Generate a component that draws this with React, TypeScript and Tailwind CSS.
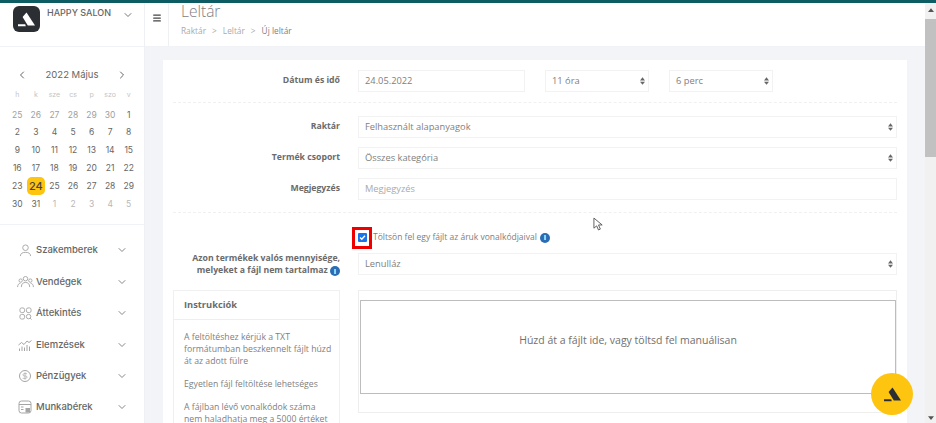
import React from "react";
import { ChevronDown, ChevronLeft, ChevronRight, Menu, DollarSign } from "lucide-react";

const sans = "font-['Inter','Liberation_Sans',sans-serif]";
const form = "font-['Open_Sans','Liberation_Sans',sans-serif]";

const weeks = [
  ["25", "26", "27", "28", "29", "30", "1"],
  ["2", "3", "4", "5", "6", "7", "8"],
  ["9", "10", "11", "12", "13", "14", "15"],
  ["16", "17", "18", "19", "20", "21", "22"],
  ["23", "24", "25", "26", "27", "28", "29"],
  ["30", "31", "1", "2", "3", "4", "5"],
];

const Logo = ({ className }: { className: string }) => (
  <svg viewBox="0 0 24 24" className={className} fill="currentColor">
    <path d="M6.5 8.5 L12 2 L24 20.5 L13.8 20.5 Z" />
    <path d="M0 18.8 H10.2 L11 21.5 H0 Z" />
  </svg>
);

const UserIcon = () => (
  <svg viewBox="0 0 14 14" className="w-[13px] h-[13px] text-[#a5a5a5]" fill="none" stroke="currentColor" strokeWidth="1">
    <circle cx="7" cy="4" r="3" />
    <path d="M1.5 13c0-3 2.5-4 5.5-4s5.5 1 5.5 4" />
  </svg>
);

const GuestsIcon = () => (
  <svg viewBox="0 0 18 14" className="w-[17px] h-[13px] text-[#a5a5a5]" fill="none" stroke="currentColor" strokeWidth="1">
    <circle cx="9" cy="4" r="2.4" />
    <path d="M4.5 13c0-3.5 2-5 4.5-5s4.5 1.5 4.5 5" />
    <circle cx="3.8" cy="6" r="1.8" />
    <path d="M.5 13c0-2.5 1.2-4 3-4" />
    <circle cx="14.2" cy="6" r="1.8" />
    <path d="M17.5 13c0-2.5-1.2-4-3-4" />
  </svg>
);

const GridIcon = () => (
  <svg viewBox="0 0 14 14" className="w-[13px] h-[13px] text-[#a5a5a5]" fill="none" stroke="currentColor" strokeWidth="1">
    <rect x="1" y="1" width="5" height="5" rx="1.8" />
    <rect x="8" y="1" width="5" height="5" rx="1.8" />
    <rect x="1" y="8" width="5" height="5" rx="1.8" />
    <circle cx="10.3" cy="10.3" r="2.4" />
    <path d="M12 12l1.5 1.5" />
  </svg>
);

const ChartIcon = () => (
  <svg viewBox="0 0 14 14" className="w-[14px] h-[14px] text-[#a5a5a5]" fill="none" stroke="currentColor" strokeWidth="1">
    <path d="M.5 7l3-2.5 2.5 2 3-3.5 2 1.5 2.5-2" />
    <path d="M1.5 13v-2.5M4 13V8.5M6.5 13v-3.5M9 13V7M11.5 13V8.5" />
  </svg>
);

const PayrollIcon = () => (
  <svg viewBox="0 0 14 14" className="w-[14px] h-[14px] text-[#a5a5a5]" fill="none" stroke="currentColor" strokeWidth="1">
    <rect x="1" y="1" width="12" height="12" rx="2.5" />
    <path d="M1 4.5h12M3 7h2.5M3 9.5h2.5" />
    <rect x="7.5" y="8" width="4.5" height="4.5" fill="currentColor" stroke="none" />
  </svg>
);

const menuItems = [
  { label: "Szakemberek", icon: <UserIcon /> },
  { label: "Vendégek", icon: <GuestsIcon /> },
  { label: "Áttekintés", icon: <GridIcon /> },
  { label: "Elemzések", icon: <ChartIcon /> },
  {
    label: "Pénzügyek",
    icon: (
      <span className="w-[12px] h-[12px] rounded-full border border-[#a5a5a5] flex items-center justify-center">
        <DollarSign className="w-2 h-2 text-[#888]" strokeWidth={1.5} />
      </span>
    ),
  },
  { label: "Munkabérek", icon: <PayrollIcon /> },
];

const Stepper = () => (
  <svg viewBox="0 0 8 12" className="w-[5px] h-[8px] text-[#666] shrink-0" fill="currentColor">
    <path d="M4 0l4 5H0zM4 12l4-5H0z" />
  </svg>
);

const Select = ({ value, className = "" }: { value: string; className?: string }) => (
  <div className={`h-[22px] border border-[#f2f2f2] bg-white flex items-center justify-between pl-[6px] pr-[3px] text-[9.3px] text-[#808080] ${className}`}>
    <span>{value}</span>
    <Stepper />
  </div>
);

const Label = ({ children }: { children: React.ReactNode }) => (
  <div className="w-[167px] shrink-0 text-right text-[8.7px] font-bold text-[#6b6b6b]">{children}</div>
);

const Info = () => (
  <span className="inline-flex w-[10px] h-[10px] rounded-full bg-[#2a6db5] text-white text-[7.5px] font-bold items-center justify-center leading-none align-[-1px]">
    i
  </span>
);

export default function App() {
  return (
    <div className="h-[423px] w-[936px] flex flex-col overflow-hidden bg-[#f3f4f8] relative">
      <div className="h-[3px] bg-[#0d5c63] shrink-0" />
      <div className="flex flex-1 min-h-0">
        {/* Sidebar */}
        <aside className={`w-[145px] shrink-0 bg-white border-r border-[#eef0f4] flex flex-col ${sans}`}>
          <div className="h-[44px] shrink-0 border-b border-[#f1f2f5] flex items-start pl-[13px] pt-[3px]">
            <div className="w-[27px] h-[26px] rounded-[6px] bg-[#2b2f33] flex items-center justify-center text-white">
              <Logo className="w-[17px] h-[17px]" />
            </div>
            <span className="ml-[7px] text-[9px] font-medium text-[#666] leading-none mt-[2px]">HAPPY SALON</span>
            <ChevronDown className="w-3 h-3 text-[#777] ml-[11px] mt-[3px]" />
          </div>

          <div className="px-[8px] pt-[20px]">
            <div className="flex items-center justify-between px-[8px] h-[16px] text-[9.5px] text-[#666]">
              <ChevronLeft className="w-3 h-3" />
              <span>2022 Május</span>
              <ChevronRight className="w-3 h-3" />
            </div>
            <div className="grid grid-cols-7 w-[130px] mt-[5px] h-[15px] items-center text-center text-[7px] text-[#c4c4c4]">
              {["h", "k", "sze", "cs", "p", "szo", "v"].map((d) => (
                <span key={d}>{d}</span>
              ))}
            </div>
            <div className="grid grid-cols-7 w-[130px] mt-[3px] text-center text-[8.5px]">
              {weeks.map((week, r) =>
                week.map((day, c) => {
                  const muted = (r === 0 && c < 6) || (r === 5 && c > 1);
                  const today = r === 4 && c === 1;
                  return (
                    <span
                      key={`${r}-${c}`}
                      className={`h-[17.8px] flex items-center justify-center ${
                        today
                          ? "bg-[#fdc50f] rounded-[5px] text-[11px] font-medium text-[#444]"
                          : muted
                            ? r === 0
                              ? "text-[#a0a0a0]"
                              : "text-[#b8b8b8]"
                            : "text-[#666]"
                      }`}
                    >
                      {day}
                    </span>
                  );
                })
              )}
            </div>
          </div>

          <div className="mt-[11px] border-t border-[#f1f2f5] pt-[10px] pl-[16px] pr-[16px] flex flex-col">
            {menuItems.map((item) => (
              <div key={item.label} className="h-[31.4px] shrink-0 flex items-center text-[9.5px] font-medium text-[#666]">
                <span className="w-[18px] flex justify-center shrink-0">{item.icon}</span>
                <span className="ml-[2px] flex-1">{item.label}</span>
                <ChevronDown className="w-3 h-3 text-[#888]" />
              </div>
            ))}
          </div>
        </aside>

        {/* Main */}
        <main className="flex-1 min-w-0 flex flex-col">
          <header className="h-[44px] shrink-0 flex bg-white border-b border-[#f1f2f5]">
            <div className="w-[24px] border-r border-[#eef0f4] flex justify-center pt-[10px]">
              <Menu className="w-[10px] h-[10px] text-[#444]" strokeWidth={3} />
            </div>
            <div className={`pl-[12px] ${form}`}>
              <h1 className="text-[15.5px] leading-[18px] text-[#808080] font-light mt-[-1px]">Leltár</h1>
              <div className="mt-[5px] text-[8.3px] text-[#aaa] flex gap-[6px]">
                <span>Raktár</span>
                <span>&gt;</span>
                <span>Leltár</span>
                <span>&gt;</span>
                <span className="text-[#808080]">Új leltár</span>
              </div>
            </div>
          </header>

          <div className="flex-1 min-h-0 overflow-hidden pt-[13px] pl-[18px] pr-[18px]">
            <section className={`bg-white h-full pl-[10px] pr-[10px] ${form}`}>
              <div className="flex items-center h-[43px] border-b border-dashed border-[#f0f0f0] mb-[13px]">
                <Label>Dátum és idő</Label>
                <div className="ml-[18px] w-[167px] h-[22px] border border-[#f2f2f2] flex items-center pl-[6px] text-[9.3px] text-[#808080]">
                  24.05.2022
                </div>
                <Select value="11 óra" className="w-[104px] ml-[20px]" />
                <Select value="6 perc" className="w-[104px] ml-[20px]" />
              </div>

              <div className="flex flex-col gap-[9px] border-b border-dashed border-[#f0f0f0] pb-[12px]">
                <div className="flex items-center">
                  <Label>Raktár</Label>
                  <Select value="Felhasznált alapanyagok" className="flex-1 ml-[18px]" />
                </div>
                <div className="flex items-center">
                  <Label>Termék csoport</Label>
                  <Select value="Összes kategória" className="flex-1 ml-[18px]" />
                </div>
                <div className="flex items-center">
                  <Label>Megjegyzés</Label>
                  <div className="flex-1 ml-[18px] h-[22px] border border-[#f2f2f2] flex items-center pl-[6px] text-[9.3px] text-[#aaa]">
                    Megjegyzés
                  </div>
                </div>
              </div>

              <div className="flex items-center h-[25px] mt-[12px] pl-[179px]">
                <span className="w-[20px] h-[22px] border-[3px] border-[#ee0000] flex items-center justify-center shrink-0">
                  <span className="w-[9px] h-[9px] rounded-[1px] bg-[#1a73e8] flex items-center justify-center">
                    <svg viewBox="0 0 10 10" className="w-[7px] h-[7px]" fill="none" stroke="white" strokeWidth="2">
                      <path d="M1.5 5l2.5 2.5 4.5-5" />
                    </svg>
                  </span>
                </span>
                <span className="ml-[1px] text-[8.5px] text-[#808080] whitespace-nowrap">Töltsön fel egy fájlt az áruk vonalkódjaival</span>
                <span className="ml-[3px] flex"><Info /></span>
              </div>

              <div className="flex items-center mt-[3px] h-[22px]">
                <Label>
                  <span className="leading-[12px] block">
                    Azon termékek valós mennyisége,
                    <br />
                    melyeket a fájl nem tartalmaz <Info />
                  </span>
                </Label>
                <Select value="Lenulláz" className="flex-1 ml-[18px]" />
              </div>

              <div className="flex mt-[15px]">
                <div className="w-[167px] shrink-0 border border-[#f0f0f0] h-[162px]">
                  <div className="h-[29px] border-b border-[#eee] flex items-center pl-[10px] text-[9.3px] font-bold text-[#6b6b6b]">
                    Instrukciók
                  </div>
                  <div className="pl-[10px] pt-[11px] text-[8.7px] leading-[12px] text-[#808080] flex flex-col gap-[11px] whitespace-nowrap">
                    <p>
                      A feltöltéshez kérjük a TXT
                      <br />
                      formátumban beszkennelt fájlt húzd
                      <br />
                      át az adott fülre
                    </p>
                    <p>Egyetlen fájl feltöltése lehetséges</p>
                    <p>
                      A fájlban lévő vonalkódok száma
                      <br />
                      nem haladhatja meg a 5000 értéket
                    </p>
                  </div>
                </div>
                <div className="ml-[18px] flex-1 border border-[#eee] h-[123px] pl-[1px] pt-[9px]">
                  <div className="h-[94px] border border-[#bdbdbd] pb-[13px] flex items-center justify-center text-[10.5px] text-[#707070]">
                    Húzd át a fájlt ide, vagy töltsd fel manuálisan
                  </div>
                </div>
              </div>
            </section>
          </div>
        </main>

        {/* Scrollbar */}
        <div className="w-[11px] shrink-0 bg-[#f1f1f1] flex flex-col items-center relative">
          <svg viewBox="0 0 8 5" className="w-[6px] h-[4px] mt-[5px] text-[#555]" fill="currentColor">
            <path d="M4 0l4 5H0z" />
          </svg>
          <div className="w-full h-[138px] mt-[7px] bg-[#c1c1c1]" />
          <svg viewBox="0 0 8 5" className="w-[6px] h-[4px] mt-auto mb-[3px] text-[#555]" fill="currentColor">
            <path d="M4 5l4-5H0z" />
          </svg>
        </div>
      </div>

      {/* Floating action button */}
      <div className="absolute left-[871px] top-[373px] w-[42px] h-[42px] rounded-full bg-[#fdc50f] flex items-center justify-center text-[#2b2f33]">
        <Logo className="w-[17px] h-[17px]" />
      </div>

      {/* Mouse pointer */}
      <svg viewBox="0 0 12 16" className="absolute left-[593px] top-[217px] w-[11px] h-[15px]" fill="white" stroke="#555" strokeWidth="1">
        <path d="M1 1v11l3-2.5 2 4.5 2-1-2-4.5h4z" />
      </svg>
    </div>
  );
}
